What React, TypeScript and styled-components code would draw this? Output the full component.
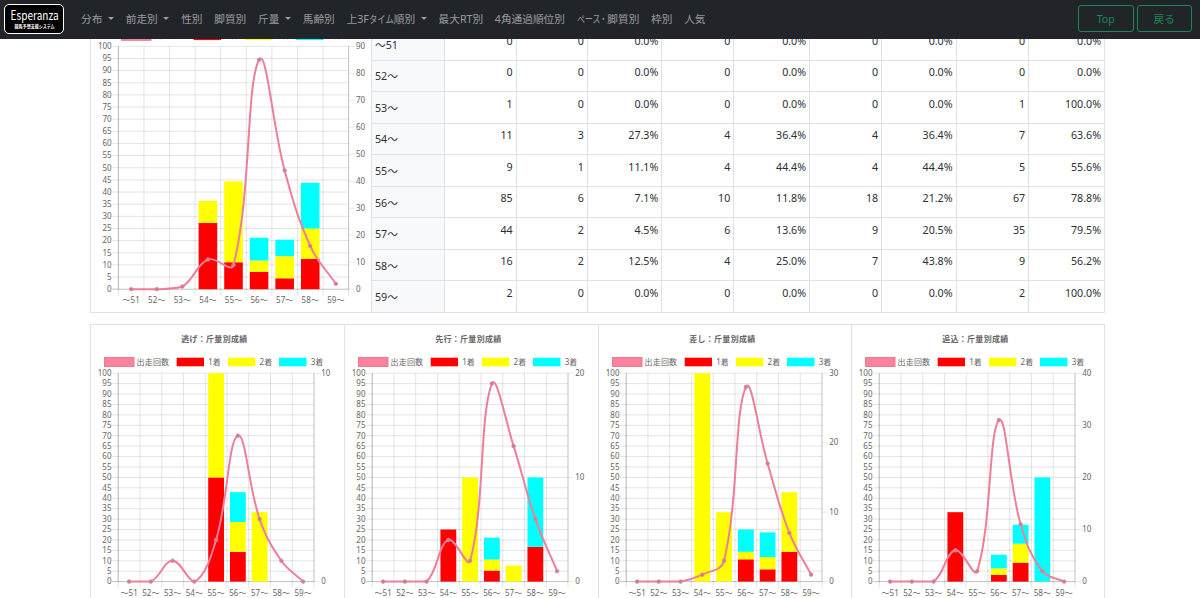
import React from 'react';
import styled, { createGlobalStyle } from 'styled-components';

const FONT = `"Noto Sans", "Noto Sans CJK JP", sans-serif`;

const GlobalStyle = createGlobalStyle`
  * { box-sizing: border-box; }
  html, body { margin: 0; background: #fff; }
  body { font-family: ${FONT}; color: #2c3034; font-size: 10.67px; overflow: hidden; }
`;

const Page = styled.div`
  height: 598px;
  overflow: hidden;
`;

const Navbar = styled.header`
  position: fixed;
  inset: 0 0 auto 0;
  z-index: 10;
  height: 39px;
  display: flex;
  align-items: center;
  padding: 0 8px 2px 4px;
  background: #212529;
`;

const Brand = styled.div`
  width: 60px;
  height: 30px;
  margin: 1px 17px 0 0;
  border: 1.5px solid #fff;
  border-radius: 5px;
  background: #000;
  color: #fff;
  display: flex;
  justify-content: center;
`;

const BrandMark = styled.svg`
  display: block;
  flex: none;
  overflow: visible;
  fill: #fff;
  font-family: "Noto Sans CJK JP", sans-serif;
`;

const NavList = styled.nav`
  display: flex;
  flex: 1;
  gap: 11.75px;
`;

const NavItem = styled.a`
  display: flex;
  align-items: center;
  white-space: nowrap;
  line-height: 16px;
  color: rgba(255, 255, 255, 0.55);
`;

const Kana = styled.span<{ $width: number; $scale: number }>`
  display: inline-block;
  width: ${(p) => p.$width}px;
  transform: scaleX(${(p) => p.$scale});
  transform-origin: left;
`;

const Caret = styled.i`
  margin-left: 5.7px;
  border: 3.2px solid transparent;
  border-top-color: currentColor;
  border-bottom: 0;
`;

const NavButtons = styled.div`
  display: flex;
  gap: 3px;
`;

const OutlineButton = styled.button`
  width: 55.5px;
  height: 27px;
  padding: 0;
  border: 1px solid #198754;
  border-radius: 3px;
  background: transparent;
  color: #198754;
  font: 10.67px ${FONT};
`;

const Main = styled.main`
  width: 1015px;
  margin-left: 90px;
  padding-top: 29px;
`;

const Summary = styled.section`
  display: flex;
  height: 284px;
  border: 1px solid #dee2e6;
  border-top: 0;
`;

const SummaryChart = styled.div`
  width: 280px;
  flex: none;
`;

const Table = styled.div`
  flex: 1;
  border-left: 1px solid #dee2e6;
`;

const Row = styled.div`
  display: grid;
  grid-template-columns: 73px 71.6px 71.2px 74.5px 72px 75.8px 72px 74.5px 72.5px 1fr;
  height: 31.55px;
  border-bottom: 1px solid #dee2e6;
  &:last-child { border-bottom: 0; height: 30.6px; }
`;

const HeadCell = styled.div`
  display: flex;
  align-items: center;
  padding-left: 3px;
  border-right: 1px solid #dee2e6;
  background: #f8f9fa;
`;

const Cell = styled.div`
  padding: 3.6px 3px 0 0;
  line-height: 16px;
  text-align: right;
  border-right: 1px solid #dee2e6;
  &:last-child { border-right: 0; }
`;

const StyleCharts = styled.section`
  display: grid;
  grid-template-columns: 253px 253.7px 253.7px 1fr;
  margin-top: 11px;
  width: 1015px;
  height: 290px;
  border: 1px solid #dee2e6;
`;

const ChartCell = styled.div`
  border-left: 1px solid #dee2e6;
  &:first-child { border-left: 0; }
`;

const ChartSvg = styled.svg`
  display: block;
  overflow: visible;
  font-family: ${FONT};
  font-size: 8px;
  fill: #666;
`;

const LABELS = ['〜51', '52〜', '53〜', '54〜', '55〜', '56〜', '57〜', '58〜', '59〜'];
const COLORS = ['#ff0000', '#ffff00', '#00ffff'];

type Stack = [number, number, number];
type ChartData = { title: string; max: number; counts: number[]; bars: Record<number, Stack> };
type Area = { left: number; right: number; top: number; bottom: number };
type Point = { x: number; y: number };

const LEGEND = [
  { label: '出走回数', x: 13.5, w: 29.5, tx: 45.6, tw: 32.5 },
  { label: '1着', x: 85.7, w: 27.3, tx: 117.2, tw: 12.6 },
  { label: '2着', x: 137, w: 27.3, tx: 168.6, tw: 12.6 },
  { label: '3着', x: 188, w: 27.5, tx: 219.7, tw: 12.6 },
];

/* Smooth path through the points, with control points kept inside the plot. */
function splinePath(pts: Point[], area: Area, tension = 0.4) {
  const clamp = (y: number) => Math.max(area.top, Math.min(area.bottom, y));
  const controls = pts.map((cur, i) => {
    const prev = pts[i - 1] ?? cur;
    const next = pts[i + 1] ?? cur;
    const d01 = Math.hypot(cur.x - prev.x, cur.y - prev.y);
    const d12 = Math.hypot(next.x - cur.x, next.y - cur.y);
    const fa = (tension * d01) / (d01 + d12);
    const fb = (tension * d12) / (d01 + d12);
    const dx = next.x - prev.x;
    const dy = next.y - prev.y;
    return {
      before: { x: cur.x - fa * dx, y: clamp(cur.y - fa * dy) },
      after: { x: cur.x + fb * dx, y: clamp(cur.y + fb * dy) },
    };
  });
  return pts
    .map((p, i) => {
      if (i === 0) return `M${p.x},${p.y}`;
      const a = controls[i - 1].after;
      const b = controls[i].before;
      return `C${a.x},${a.y} ${b.x},${b.y} ${p.x},${p.y}`;
    })
    .join(' ');
}

function Chart({ data, area, width, height, legendY, legendX = [0, 0, 0, 0] }: {
  data: ChartData; area: Area; width: number; height: number; legendY: number; legendX?: number[];
}) {
  const { left, right, top, bottom } = area;
  const step = (right - left) / LABELS.length;
  const yAt = (v: number, max: number) => bottom - (v / max) * (bottom - top);
  const pts = data.counts.map((c, i) => ({ x: left + step * (i + 0.5), y: yAt(c, data.max) }));
  const rightTicks = Array.from({ length: data.max / 10 + 1 }, (_, i) => i * 10);
  return (
    <ChartSvg width={width} height={height}>
      {data.title && (
        <text x={123.2} y={17.2} textAnchor="middle" fontWeight="bold" textLength={66}>{data.title}</text>
      )}
      {LEGEND.map((l, i) => (
        <g key={l.label}>
          <rect
            x={l.x + legendX[i]} y={legendY + (i ? 0.7 : 0.5)} width={l.w} height={i ? 8.6 : 9}
            fill={i ? COLORS[i - 1] : '#ff829d'} stroke={i ? 'none' : '#ea7b94'}
          />
          <text x={l.tx + legendX[i]} y={legendY + 7.6} textLength={l.tw}>{l.label}</text>
        </g>
      ))}
      {Array.from({ length: 21 }, (_, i) => i * 5).map((v) => (
        <g key={v}>
          <line x1={left - 6} x2={right} y1={yAt(v, 100)} y2={yAt(v, 100)} stroke={v ? 'rgba(0,0,0,.12)' : 'rgba(0,0,0,.28)'} strokeWidth={0.9} />
          <text x={left - 6.7} y={yAt(v, 100) + 2.8} textAnchor="end">{v}</text>
        </g>
      ))}
      {Array.from({ length: LABELS.length + 1 }, (_, i) => left + step * i).map((x, i) => (
        <line key={i} x1={x} x2={x} y1={top} y2={bottom + 6.5} stroke="rgba(0,0,0,.12)" strokeWidth={0.9} />
      ))}
      <line x1={left} x2={left} y1={top} y2={bottom} stroke="rgba(0,0,0,.2)" />
      <line x1={right} x2={right} y1={top} y2={bottom} stroke="rgba(0,0,0,.15)" />
      {rightTicks.map((v) => (
        <g key={v}>
          <line x1={right} x2={right + 6} y1={yAt(v, data.max)} y2={yAt(v, data.max)} stroke="rgba(0,0,0,.12)" strokeWidth={0.8} />
          <text x={right + 7.3} y={yAt(v, data.max) + 2.8}>{v}</text>
        </g>
      ))}
      {LABELS.map((l, i) => (
        <text key={l} x={left + step * (i + 0.5)} y={bottom + 13.9} textAnchor="middle" textLength={17.3}>{l}</text>
      ))}
      {Object.entries(data.bars).map(([index, stack]) => {
        let base = 0;
        return stack.map((v, s) => {
          const y = yAt(base + v, 100);
          const h = yAt(base, 100) - y;
          base += v;
          return v ? (
            <rect key={`${index}-${s}`} x={left + step * (Number(index) + 0.5) - step * 0.363} y={y} width={step * 0.726} height={h} fill={COLORS[s]} />
          ) : null;
        });
      })}
      <path d={splinePath(pts, area)} fill="none" stroke="#ef7f99" strokeWidth={2} />
      {pts.map((p, i) => (
        <circle key={i} cx={p.x} cy={p.y} r={1.8} fill="#dc7590" stroke="#d28aa0" strokeWidth={0.8} />
      ))}
    </ChartSvg>
  );
}

const TOTAL: ChartData = {
  title: '', max: 90, counts: [0, 0, 1, 11, 9, 85, 44, 16, 2],
  bars: { 3: [27.3, 9.1, 0], 4: [11.1, 33.3, 0], 5: [7.1, 4.7, 9.4], 6: [4.5, 9.1, 6.8], 7: [12.5, 12.5, 18.8] },
};

const BY_STYLE: ChartData[] = [
  { title: '逃げ：斤量別成績', max: 10, counts: [0, 0, 1, 0, 2, 7, 3, 1, 0],
    bars: { 4: [50, 50, 0], 5: [14.3, 14.3, 14.3], 6: [0, 33.3, 0] } },
  { title: '先行：斤量別成績', max: 20, counts: [0, 0, 0, 4, 2, 19, 13, 6, 1],
    bars: { 3: [25, 0, 0], 4: [0, 50, 0], 5: [5.3, 5.3, 10.5], 6: [0, 7.7, 0], 7: [16.7, 0, 33.3] } },
  { title: '差し：斤量別成績', max: 30, counts: [0, 0, 0, 1, 3, 28, 17, 7, 1],
    bars: { 3: [0, 100, 0], 4: [0, 33.3, 0], 5: [10.7, 3.6, 10.7], 6: [5.9, 5.9, 11.8], 7: [14.3, 28.6, 0] } },
  { title: '追込：斤量別成績', max: 40, counts: [0, 0, 0, 6, 2, 31, 11, 2, 0],
    bars: { 3: [33.3, 0, 0], 5: [3.2, 3.2, 6.5], 6: [9.1, 9.1, 9.1], 7: [0, 0, 50] } },
];

const ROWS: string[][] = [
  ['〜51', '0', '0', '0.0%', '0', '0.0%', '0', '0.0%', '0', '0.0%'],
  ['52〜', '0', '0', '0.0%', '0', '0.0%', '0', '0.0%', '0', '0.0%'],
  ['53〜', '1', '0', '0.0%', '0', '0.0%', '0', '0.0%', '1', '100.0%'],
  ['54〜', '11', '3', '27.3%', '4', '36.4%', '4', '36.4%', '7', '63.6%'],
  ['55〜', '9', '1', '11.1%', '4', '44.4%', '4', '44.4%', '5', '55.6%'],
  ['56〜', '85', '6', '7.1%', '10', '11.8%', '18', '21.2%', '67', '78.8%'],
  ['57〜', '44', '2', '4.5%', '6', '13.6%', '9', '20.5%', '35', '79.5%'],
  ['58〜', '16', '2', '12.5%', '4', '25.0%', '7', '43.8%', '9', '56.2%'],
  ['59〜', '2', '0', '0.0%', '0', '0.0%', '0', '0.0%', '2', '100.0%'],
];

const NAV: { label: React.ReactNode; menu?: boolean }[] = [
  { label: '分布', menu: true },
  { label: '前走別', menu: true },
  { label: '性別' },
  { label: '脚質別' },
  { label: '斤量', menu: true },
  { label: '馬齢別' },
  { label: <>上3F<Kana $width={25} $scale={0.78}>タイム</Kana>順別</>, menu: true },
  { label: '最大RT別' },
  { label: '4角通過順位別' },
  { label: <><Kana $width={23.5} $scale={0.74}>ペース</Kana><Kana $width={7.2} $scale={0.62}>・</Kana>脚質別</> },
  { label: '枠別' },
  { label: '人気' },
];

export default function App() {
  return (
    <Page>
      <GlobalStyle />
      <Navbar>
        <Brand>
          <BrandMark width="57" height="27">
            <text x="4.6" y="15" fontSize="12.5" textLength="48" lengthAdjust="spacingAndGlyphs">Esperanza</text>
            <text x="8.6" y="22.8" fontSize="4.6" fontWeight="bold" textLength="40" lengthAdjust="spacingAndGlyphs">競馬予想支援システム</text>
          </BrandMark>
        </Brand>
        <NavList>
          {NAV.map((item, i) => (
            <NavItem key={i}><span>{item.label}</span>{item.menu && <Caret />}</NavItem>
          ))}
        </NavList>
        <NavButtons>
          <OutlineButton>Top</OutlineButton>
          <OutlineButton>戻る</OutlineButton>
        </NavButtons>
      </Navbar>
      <Main>
        <Summary>
          <SummaryChart>
            <Chart
              data={TOTAL} width={280} height={283} legendY={1.8} legendX={[17, 17, 17, 17]}
              area={{ left: 27.4, right: 257.6, top: 17.3, bottom: 260.2 }}
            />
          </SummaryChart>
          <Table>
            {ROWS.map(([label, ...values]) => (
              <Row key={label}>
                <HeadCell>{label}</HeadCell>
                {values.map((v, i) => <Cell key={i}>{v}</Cell>)}
              </Row>
            ))}
          </Table>
        </Summary>
        <StyleCharts>
          {BY_STYLE.map((d) => (
            <ChartCell key={d.title}>
              <Chart
                data={d} width={252} height={285} legendY={32}
                area={{ left: 27.2, right: 223, top: 48.2, bottom: 256.6 }}
              />
            </ChartCell>
          ))}
        </StyleCharts>
      </Main>
    </Page>
  );
}
